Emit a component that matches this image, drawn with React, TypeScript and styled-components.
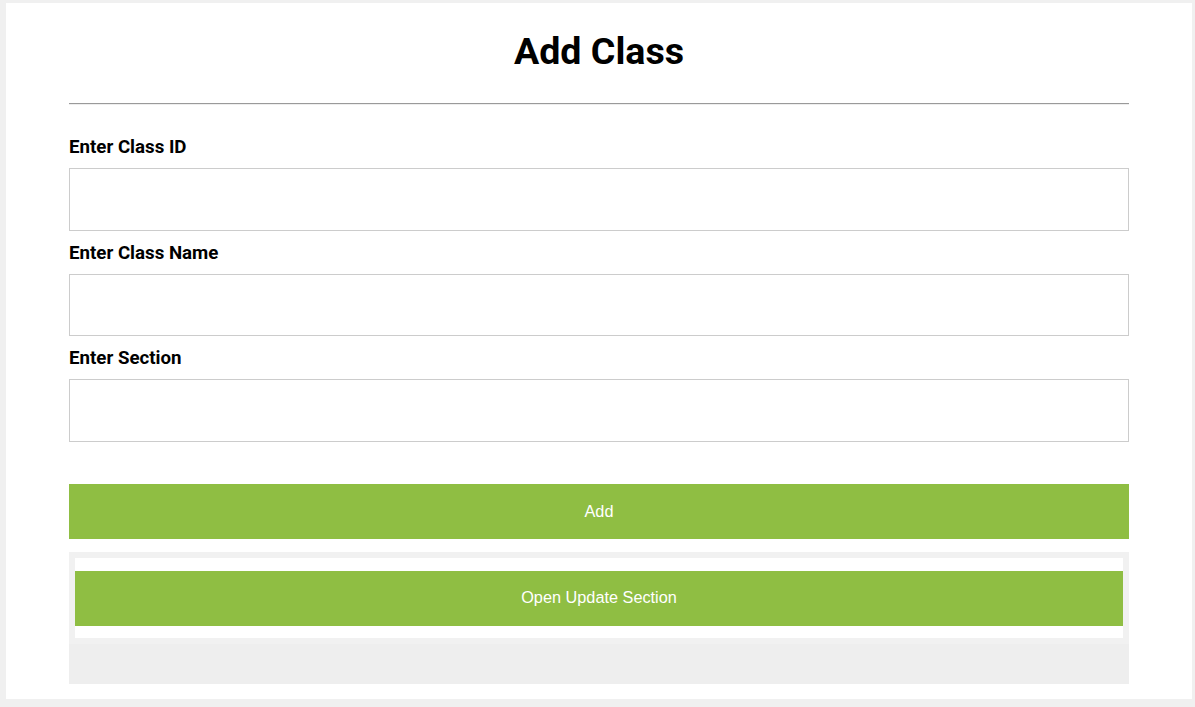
import React from "react";
import styled, { createGlobalStyle } from "styled-components";

const GlobalStyle = createGlobalStyle`
  html, body {
    margin: 0;
    padding: 0;
    background: #f0f0f0;
  }
  body {
    font-family: Roboto, "Liberation Sans", Arial, sans-serif;
  }
  * { box-sizing: border-box; }
`;

const Page = styled.div`
  padding: 3px 3px 8px 6px;
`;

const Card = styled.div`
  background: #ffffff;
  padding: 0 63px 15px;
`;

const Title = styled.h1`
  margin: 0;
  padding-top: 26px;
  font-family: Roboto, sans-serif;
  font-weight: 700;
  font-size: 37.6px;
  line-height: 44px;
  text-align: center;
  color: #000;
`;

const Divider = styled.hr`
  margin: 30px 0 0;
  height: 2px;
  border: none;
  border-top: 1px solid #9a9a9a;
  border-bottom: 1px solid #eeeeee;
`;

const Form = styled.form`
  display: flex;
  flex-direction: column;
  padding-top: 31px;
`;

const Label = styled.label`
  display: block;
  font-family: Roboto, sans-serif;
  font-weight: 700;
  font-size: 18.7px;
  line-height: 23px;
  color: #000;
  margin: 0 0 9px 0;
`;

const Input = styled.input`
  display: block;
  width: 100%;
  height: 62.5px;
  margin: 0 0 11px;
  border: 1px solid #cccccc;
  background: #fff;
  padding: 0 10px;
  font-size: 16px;
  outline: none;
`;

const GreenButton = styled.button<{ $top?: number; $raise?: boolean }>`
  display: flex;
  align-items: center;
  justify-content: center;
  width: 100%;
  height: 55px;
  margin-top: ${(p) => p.$top ?? 0}px;
  padding: ${(p) => (p.$raise ? "0 0 1px" : "1px 0 0")};
  border: none;
  background: #8fbe43;
  color: #ffffff;
  font-family: "Liberation Sans", Arial, sans-serif;
  font-size: 16.3px;
  cursor: pointer;
`;

const UpdateArea = styled.div`
  margin-top: 13px;
  background: #eeeeee;
  padding-bottom: 40px;
`;

const UpdateFrame = styled.div`
  background: #f1f1f1;
  padding: 6px;
`;

const UpdateInner = styled.div`
  background: #ffffff;
  padding: 13px 0 12px;
`;

export default function App() {
  return (
    <>
      <GlobalStyle />
      <Page>
        <Card>
          <Title>Add Class</Title>
          <Divider />
          <Form onSubmit={(e) => e.preventDefault()}>
            <Label htmlFor="classId">Enter Class ID</Label>
            <Input id="classId" type="text" />
            <Label htmlFor="className">Enter Class Name</Label>
            <Input id="className" type="text" />
            <Label htmlFor="section">Enter Section</Label>
            <Input id="section" type="text" />
            <GreenButton type="submit" $top={31}>Add</GreenButton>
          </Form>
          <UpdateArea>
            <UpdateFrame>
              <UpdateInner>
                <GreenButton type="button" $raise>Open Update Section</GreenButton>
              </UpdateInner>
            </UpdateFrame>
          </UpdateArea>
        </Card>
      </Page>
    </>
  );
}
